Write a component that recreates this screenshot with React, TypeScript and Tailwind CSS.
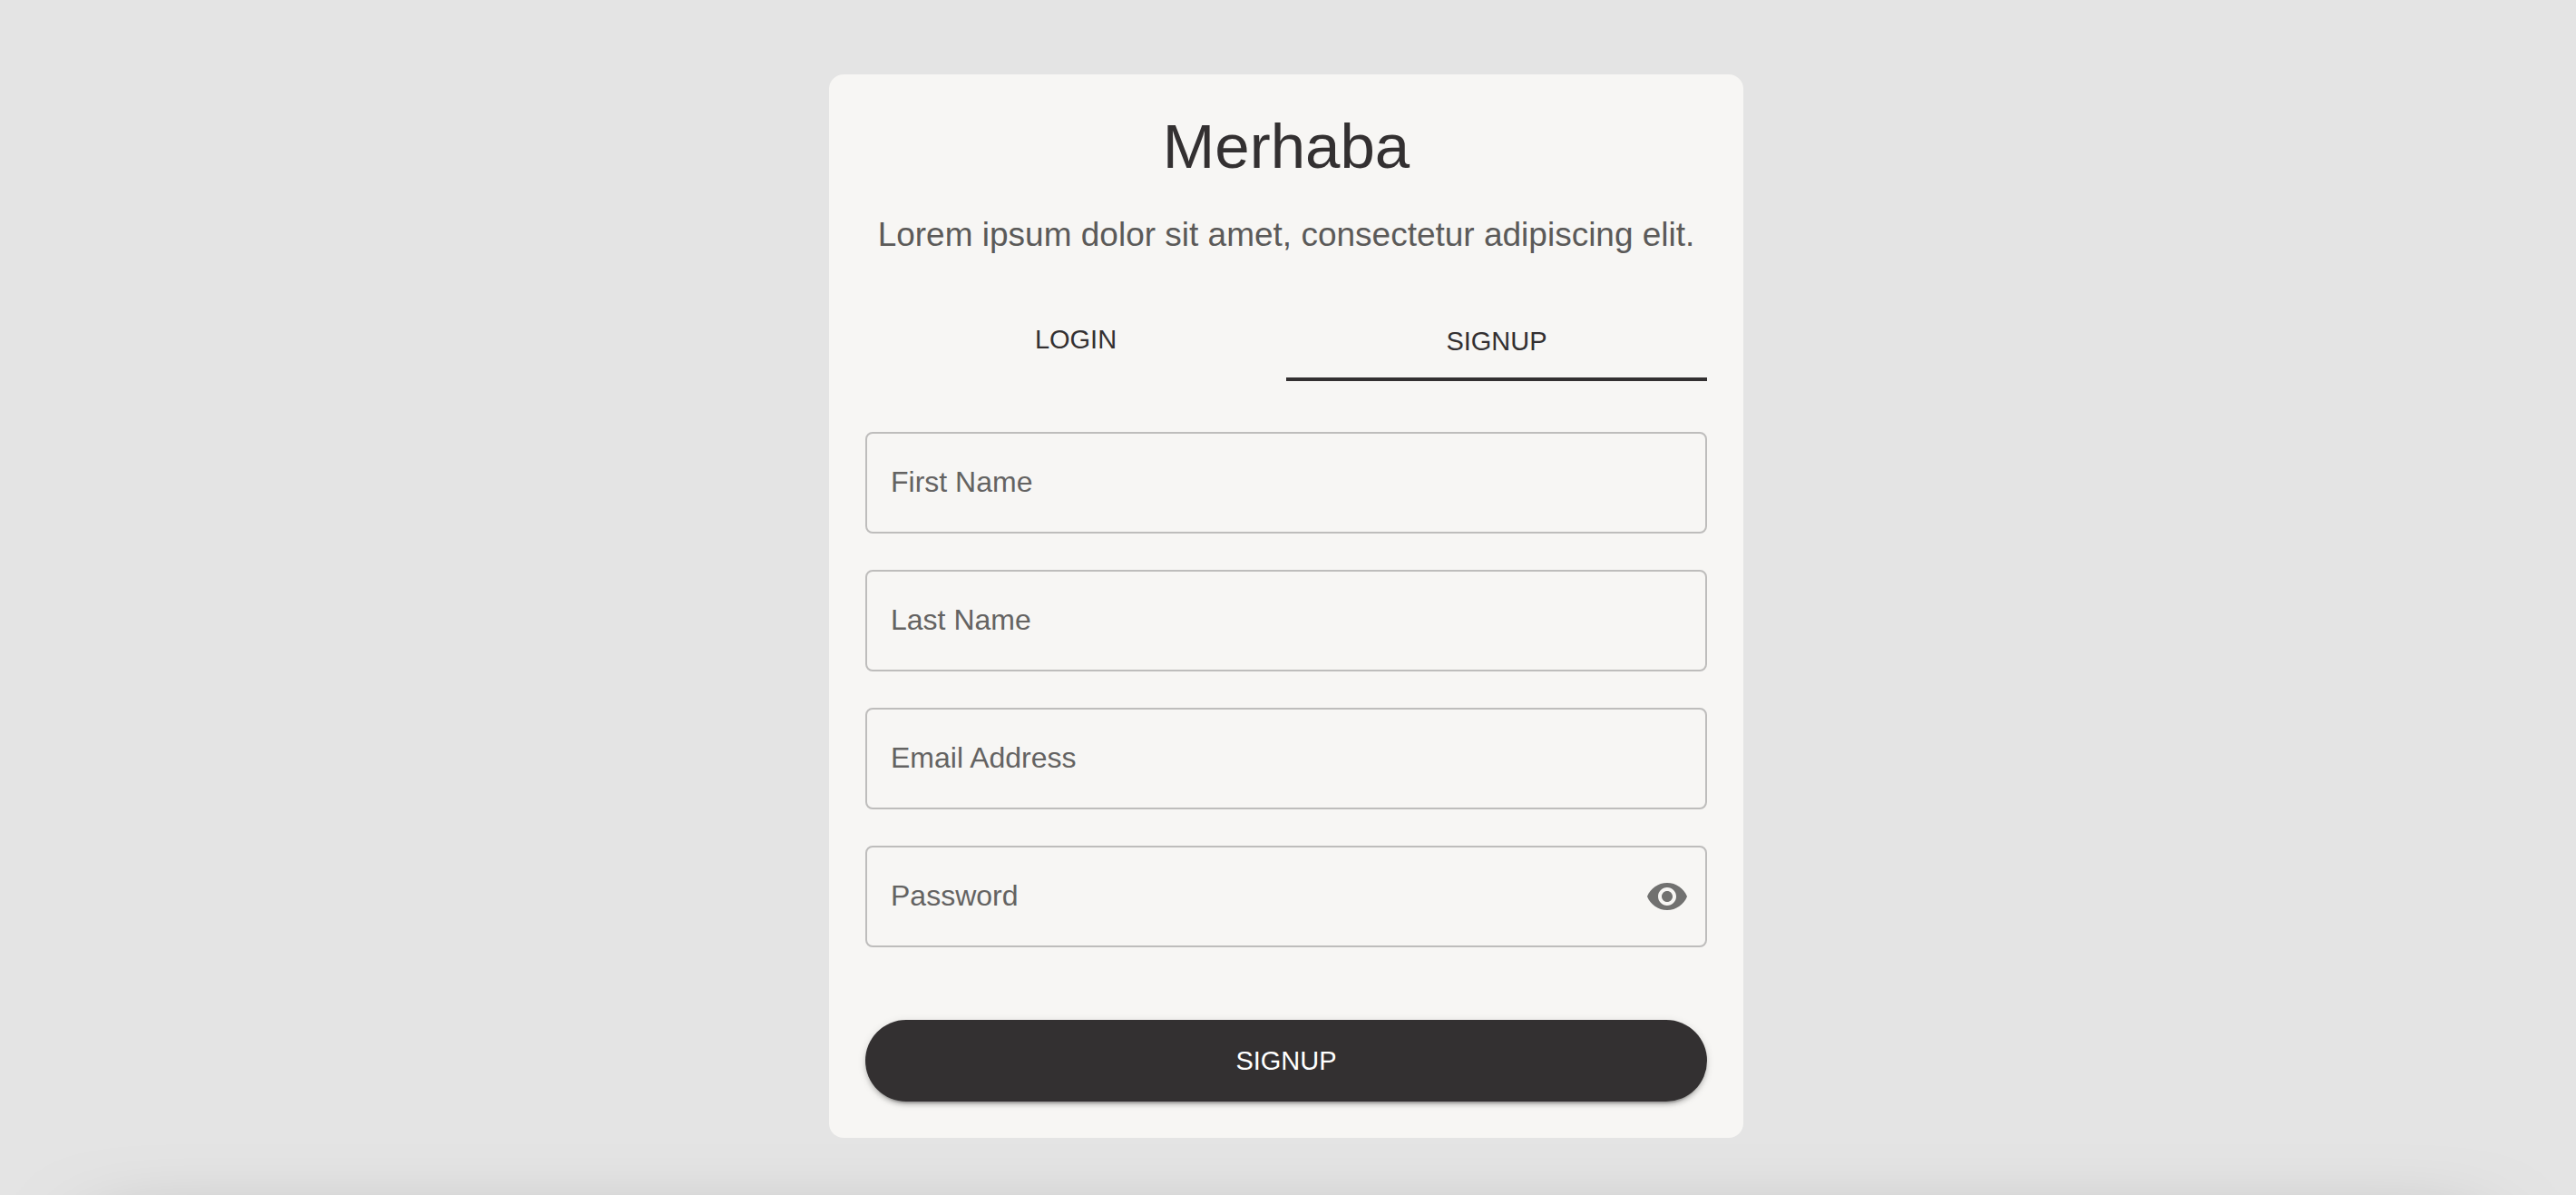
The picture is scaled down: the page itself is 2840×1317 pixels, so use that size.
import { useState } from "react";
import { MdVisibility, MdVisibilityOff } from "react-icons/md";

type FieldProps = {
  id: string;
  label: string;
  type?: string;
  children?: React.ReactNode;
};

function Field({ id, label, type = "text", children }: FieldProps) {
  return (
    <div className="relative flex h-28 items-center rounded-lg border-2 border-[#bebdbc] pr-[18px] focus-within:border-[#333031]">
      <input
        id={id}
        name={id}
        type={type}
        placeholder=" "
        className="peer h-full min-w-0 flex-1 bg-transparent px-[26px] text-[32px] text-[#333031] outline-none"
      />
      <label
        htmlFor={id}
        className="pointer-events-none absolute left-[26px] bg-[#f7f6f4] pb-0.5 text-[32px] leading-[46px] text-[#646362] peer-focus:-top-6 peer-focus:text-2xl peer-[:not(:placeholder-shown)]:-top-6 peer-[:not(:placeholder-shown)]:text-2xl"
      >
        {label}
      </label>
      {children}
    </div>
  );
}

export default function App() {
  const [visible, setVisible] = useState(false);

  return (
    <main className="relative flex min-h-screen items-start justify-center overflow-hidden bg-[#e4e4e4] pt-[82px] pr-1 pb-[63px] font-['Liberation_Sans',Arial,sans-serif]">
      <section className="w-full max-w-[1008px] rounded-2xl bg-[#f7f6f4] p-10 text-center">
        <h1 className="text-[69px] leading-20 text-[#333031]">Merhaba</h1>
        <p className="mt-7.5 text-[37px] leading-[54px] text-[#5b5a59]">
          Lorem ipsum dolor sit amet, consectetur adipiscing elit.
        </p>

        <div role="tablist" className="mt-12.5 grid grid-cols-2 items-start text-[29px] leading-8 text-[#333031]">
          <button type="button" role="tab" aria-selected={false} className="py-5.5">
            LOGIN
          </button>
          <button
            type="button"
            role="tab"
            aria-selected={true}
            className="border-b-4 border-[#333031] py-6"
          >
            SIGNUP
          </button>
        </div>

        <form className="mt-14 flex flex-col gap-10 text-left" onSubmit={(e) => e.preventDefault()}>
          <Field id="firstName" label="First Name" />
          <Field id="lastName" label="Last Name" />
          <Field id="email" label="Email Address" type="email" />
          <Field id="password" label="Password" type={visible ? "text" : "password"}>
            <button
              type="button"
              aria-label="Toggle password visibility"
              onClick={() => setVisible(!visible)}
              className="text-[#717170]"
            >
              {visible ? <MdVisibilityOff className="size-12" /> : <MdVisibility className="size-12" />}
            </button>
          </Field>
          <button
            type="submit"
            className="mt-10 h-[90px] rounded-full bg-[#333031] text-[29px] leading-8 text-white shadow-[0_6px_2px_-4px_rgba(0,0,0,0.2),0_4px_4px_0_rgba(0,0,0,0.14),0_2px_10px_0_rgba(0,0,0,0.12)]"
          >
            SIGNUP
          </button>
        </form>
      </section>

      {/* soft shade rising from below the page */}
      <div
        aria-hidden="true"
        className="pointer-events-none absolute inset-x-28 top-full mt-16 h-40 shadow-[0_0_100px_0_rgba(0,0,0,0.5)]"
      />
    </main>
  );
}
